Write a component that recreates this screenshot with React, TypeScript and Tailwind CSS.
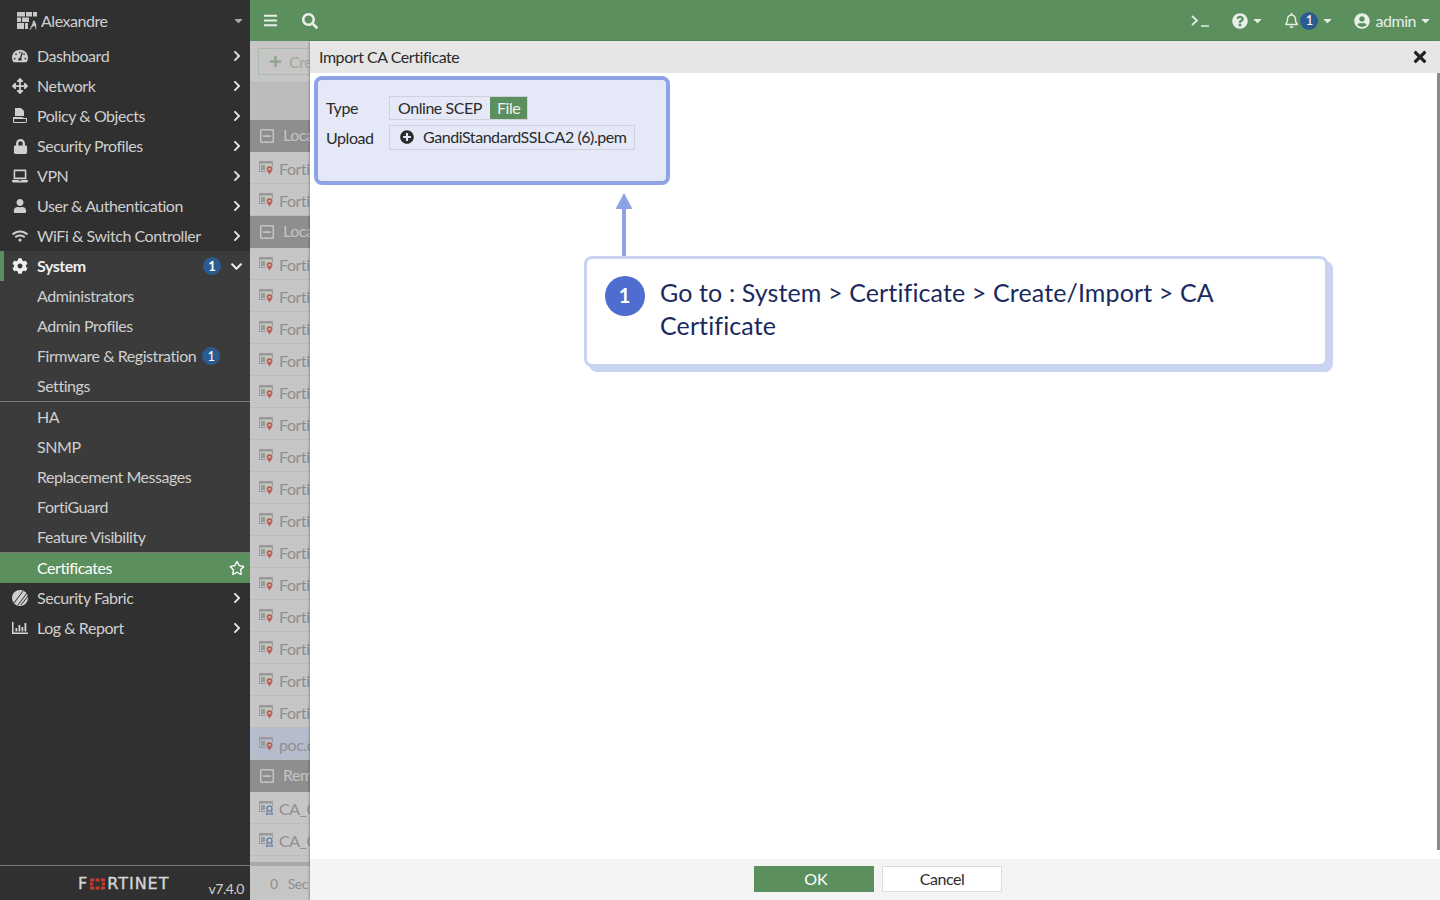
import React from "react";
import {
  FaArrowsAlt,
  FaBars,
  FaCaretDown,
  FaChevronDown,
  FaChevronRight,
  FaCog,
  FaLaptop,
  FaLock,
  FaPlus,
  FaPlusCircle,
  FaQuestionCircle,
  FaRegBell,
  FaRegMinusSquare,
  FaRegStar,
  FaSearch,
  FaTachometerAlt,
  FaTimes,
  FaUser,
  FaUserCircle,
  FaWifi,
} from "react-icons/fa";

const Badge = () => (
  <span className="flex h-[18px] w-[18px] items-center justify-center rounded-full bg-[#2a5b91] text-[13px] leading-none tracking-normal text-white">
    1
  </span>
);

const PolicyIcon = () => (
  <svg viewBox="0 0 16 16" className="h-4 w-4" fill="#cfcfcf">
    <path d="M3 0h6l3 3v5H3z" />
    <path d="M1 9h9l2 1h3v3a2 2 0 0 1-2 2H2a1 1 0 0 1-1-1zM2 11v3h11a1 1 0 0 0 1-1v-2z" />
  </svg>
);

const FabricIcon = () => (
  <svg viewBox="0 0 16 16" className="h-4 w-4">
    <circle cx="8" cy="8" r="8" fill="#cfcfcf" />
    <path d="M15 3 6 15M16 6l-7 9M11 1 2 13" stroke="#303030" strokeWidth="1" />
  </svg>
);

const LogIcon = () => (
  <svg viewBox="0 0 16 16" className="h-4 w-4" fill="#d6d6d6">
    <path d="M0 2h1.500v10.500H16V14H0z" />
    <path d="M3.500 8h1.800v3.500H3.500zM6.500 5h1.800v6.500H6.500zM9.500 7h1.800v4.500H9.500zM12.500 3h1.800v8.500h-1.800z" />
  </svg>
);

const WallLogo = () => (
  <svg viewBox="0 0 20 20" className="h-5 w-5" fill="#c8c8c8">
    <path d="M0 1h8v4.500H0zM9 1h6v4.500H9zM16 1h4v4.500h-4zM0 6.500h4V11H0zM5 6.500h7V11H5zM0 12h7v6H0zM8 12h3v6H8z" />
    <path d="M12 19l3-6 1-4 2 1 1.500 3.500V19h-1l-1-4-2 1-2 3z" stroke="#303030" strokeWidth="0.6" />
  </svg>
);

const CertIcon = ({ kind }: { kind: "pin" | "ribbon" }) => (
  <svg viewBox="0 0 15 15" className="-mt-[2px] h-[15px] w-[15px] shrink-0">
    <path d="M0 1h14v2.500H0z" fill="#9a9a9a" />
    <path d="M0 1h1v10h6v1H0zM2 5h4v5H2z" fill="#9a9a9a" />
    <path d="M13 3.500h1V6h-1z" fill="#9a9a9a" />
    {kind === "pin" ? (
      <>
        <path d="M10.500 6a3 3 0 0 1 3 3c0 2-3 5.500-3 5.500S7.500 11 7.500 9a3 3 0 0 1 3-3z" fill="#b5675c" />
        <circle cx="10.500" cy="9" r="1" fill="#c6c6c6" />
      </>
    ) : (
      <>
        <circle cx="10.500" cy="8.500" r="2.500" fill="none" stroke="#6c89a8" strokeWidth="1.600" />
        <path d="M8.500 11l-1 4 3-1.500 3 1.500-1-4" fill="none" stroke="#6c89a8" strokeWidth="1.300" />
      </>
    )}
  </svg>
);

const FortinetLogo = () => (
  <span className="mt-[1px] flex items-center text-[16px] leading-none tracking-[1px] text-[#d4d4d4] [-webkit-text-stroke:0.4px_#d4d4d4] [font-family:'DejaVu_Sans',sans-serif]">
    F
    <svg viewBox="0 0 15 11" className="mx-[2px] h-[12px] w-[15px]" fill="#c8392b">
      <path d="M0 0h4v3H0zM5.500 0h4v3h-4zM11 0h4v3h-4zM0 4h3v3H0zM12 4h3v3h-3zM0 8h4v3H0zM5.500 8h4v3h-4zM11 8h4v3h-4z" />
    </svg>
    RTINET
  </span>
);

const topMenu = [
  { label: "Dashboard", icon: <FaTachometerAlt size={16} /> },
  { label: "Network", icon: <FaArrowsAlt size={16} /> },
  { label: "Policy & Objects", icon: <PolicyIcon /> },
  { label: "Security Profiles", icon: <FaLock size={15} /> },
  { label: "VPN", icon: <FaLaptop size={16} /> },
  { label: "User & Authentication", icon: <FaUser size={14} /> },
  { label: "WiFi & Switch Controller", icon: <FaWifi size={16} /> },
];

const MenuRow = ({ label, icon }: { label: string; icon: React.ReactNode }) => (
  <div className="flex h-[30px] items-center pl-3 pr-[7px] text-[#cfcfcf]">
    <span className="flex w-4 justify-center">{icon}</span>
    <span className="ml-[9px] flex-1">{label}</span>
    <FaChevronRight size={12} className="text-[#e2e2e2]" />
  </div>
);

const SubRow = ({ label, badge }: { label: string; badge?: boolean }) => (
  <div className="flex h-[30px] items-center gap-[6px] pl-[37px] text-[#cfcfcf]">
    {label}
    {badge ? <Badge /> : null}
  </div>
);

const Sidebar = () => (
  <aside className="flex h-full w-[250px] shrink-0 flex-col bg-[#303030]">
    <div className="flex h-[41px] items-center pl-[17px] pr-[5px] text-[#cfcfcf]">
      <WallLogo />
      <span className="ml-[4px] flex-1">Alexandre</span>
      <FaCaretDown size={13} className="text-[#aaaaaa]" />
    </div>
    {topMenu.map((item) => (
      <MenuRow key={item.label} label={item.label} icon={item.icon} />
    ))}
    <div className="bg-[#3b3b3b]">
      <div className="flex h-[30px] items-center border-l-4 border-[#5c8f5e] pl-2 pr-[7px] font-bold text-[#efefef]">
        <span className="flex w-4 justify-center">
          <FaCog size={16} />
        </span>
        <span className="ml-[9px] flex-1">System</span>
        <Badge />
        <FaChevronDown size={13} className="ml-[9px]" />
      </div>
      <SubRow label="Administrators" />
      <SubRow label="Admin Profiles" />
      <SubRow label="Firmware & Registration" badge />
      <SubRow label="Settings" />
      <div className="h-px bg-[#7a7a7a]" />
      <SubRow label="HA" />
      <SubRow label="SNMP" />
      <SubRow label="Replacement Messages" />
      <SubRow label="FortiGuard" />
      <SubRow label="Feature Visibility" />
    </div>
    <div className="h-px bg-[#7a7a7a]" />
    <div className="flex h-[30px] items-center bg-[#5c8f5e] pl-[37px] pr-[5px] text-white">
      <span className="flex-1">Certificates</span>
      <FaRegStar size={16} />
    </div>
    <MenuRow label="Security Fabric" icon={<FabricIcon />} />
    <MenuRow label="Log & Report" icon={<LogIcon />} />
    <div className="mt-auto flex h-[35px] items-center border-t border-[#7a7a7a] pl-[78px] pr-[6px]">
      <FortinetLogo />
      <span className="ml-auto pt-[12px] text-[14px] leading-none text-[#cfcfcf]">v7.4.0</span>
    </div>
  </aside>
);

const TopBar = () => (
  <header className="flex h-[41px] shrink-0 items-center bg-[#5c8f5e] pl-[13px] pr-[8px] text-[#e6eee6]">
    <FaBars size={15} />
    <FaSearch size={16} className="ml-[24px]" />
    <div className="ml-auto flex items-center">
      <svg viewBox="0 0 18 12" className="h-3 w-[18px]" fill="none" stroke="#e6eee6" strokeWidth="1.700">
        <path d="M1 1l5 4.500L1 10M10 11h8" />
      </svg>
      <FaQuestionCircle size={16} className="ml-[23px]" />
      <FaCaretDown size={13} className="ml-[3px]" />
      <FaRegBell size={15} className="ml-[20px]" />
      <span className="ml-[1px]">
        <Badge />
      </span>
      <FaCaretDown size={13} className="ml-[3px]" />
      <FaUserCircle size={16} className="ml-[20px]" />
      <span className="ml-[5px] leading-none">admin</span>
      <FaCaretDown size={13} className="ml-[3px]" />
    </div>
  </header>
);

const Section = ({ label }: { label: string }) => (
  <div className="flex h-8 shrink-0 items-center gap-2 bg-[#8e8e8e] pl-[9px] text-[#c4c4c4]">
    <FaRegMinusSquare size={16} className="shrink-0" />
    <span className="pb-[2px]">{label}</span>
  </div>
);

const CertRow = ({ label, kind, selected }: { label: string; kind: "pin" | "ribbon"; selected?: boolean }) => (
  <div
    className={`flex h-8 shrink-0 items-center gap-[5px] border-b border-[#bcbcbc] pl-[9px] pt-[2px] text-[#8f8f8f] ${
      selected ? "bg-[#b5bccb]" : "bg-[#c6c6c6]"
    }`}
  >
    <CertIcon kind={kind} />
    {label}
  </div>
);

const forti = Array.from({ length: 15 }, (_, i) => i);

// what is left of the certificate table next to the slide-in dialog
const BackgroundStrip = () => (
  <div className="flex h-full w-[60px] shrink-0 flex-col overflow-hidden whitespace-nowrap bg-[#c6c6c6]">
    <div className="flex h-[42px] shrink-0 items-center border-b border-[#b8b8b8] pl-2">
      <div className="flex h-[27px] w-[80px] shrink-0 items-center gap-[7px] border border-[#a9bba9] pl-[10px] text-[#9aa99a]">
        <FaPlus size={13} className="shrink-0 text-[#8ea58e]" />
        Cre
      </div>
    </div>
    <div className="h-[37px] shrink-0 bg-[#bcbcbc]" />
    <Section label="Loca" />
    <CertRow label="Forti" kind="pin" />
    <CertRow label="Forti" kind="pin" />
    <Section label="Loca" />
    {forti.map((i) => (
      <CertRow key={i} label="Forti" kind="pin" />
    ))}
    <CertRow label="poc.c" kind="pin" selected />
    <Section label="Rem" />
    <CertRow label="CA_C" kind="ribbon" />
    <CertRow label="CA_C" kind="ribbon" />
    <div className="mt-[6px] h-[4px] shrink-0 bg-[#a9a9a9]" />
    <div className="flex flex-1 items-center gap-[10px] pl-[20px] text-[14px] text-[#8f8f8f]">
      <span>0</span>
      <span>Sec</span>
    </div>
  </div>
);

const ImportForm = () => (
  <div className="ml-[4px] mt-[3px] h-[109px] w-[356px] rounded-lg border-4 border-[#8ea2e6] bg-[#e4e8f7] pl-2 pt-4 text-[#2b2b2b]">
    <div className="flex h-6 items-center">
      <span className="w-[63px]">Type</span>
      <div className="flex h-6 border border-[#cfd2dc]">
        <span className="flex items-center pb-[1px] pl-2 pr-[8px]">Online SCEP</span>
        <span className="flex items-center bg-[#5c8f5e] px-[7px] pb-[1px] text-[#f2f2f2]">File</span>
      </div>
    </div>
    <div className="mt-[5px] flex h-[25px] items-center">
      <span className="w-[63px]">Upload</span>
      <div className="flex h-[25px] items-center border border-[#cfd2dc] pb-[1px] pl-[10px] pr-2">
        <FaPlusCircle size={14} />
        <span className="ml-[9px]">GandiStandardSSLCA2 (6).pem</span>
      </div>
    </div>
  </div>
);

const Callout = () => (
  <>
    <svg viewBox="0 0 18 64" className="absolute left-[305px] top-[152px] h-16 w-[18px]" fill="#8ea2e6">
      <path d="M9 0l8.500 16H11v48H7V16H.5z" />
    </svg>
    <div className="absolute left-[274px] top-[215px] flex h-[111px] w-[744px] items-start rounded-lg border-[3px] border-[#c9d3f2] bg-white pl-[18px] pt-[17px] shadow-[5px_5px_0_#c9d3f2]">
      <span className="flex h-10 w-10 shrink-0 items-center justify-center rounded-full bg-[#4f6dcf] pb-[2px] pr-[1px] text-[20px] font-bold leading-none tracking-normal text-white">
        1
      </span>
      <p className="ml-[15px] text-[25px] leading-[33px] tracking-[0.12px] text-[#1b2a5e]">
        Go to : System &gt; Certificate &gt; Create/Import &gt; CA Certificate
      </p>
    </div>
  </>
);

const Dialog = () => (
  <section className="relative flex h-full flex-1 flex-col bg-white shadow-[-1px_0_2px_rgba(0,0,0,0.25)]">
    <div className="flex h-8 shrink-0 items-center justify-between bg-[#e6e6e6] pl-[9px] pr-[11px] text-[#2b2b2b]">
      <span>Import CA Certificate</span>
      <FaTimes size={18} className="text-[#222222]" />
    </div>
    <div className="relative flex-1">
      <ImportForm />
      <div className="absolute right-0 top-0 h-[777px] w-[3px] bg-[#8a8a8a]" />
    </div>
    <div className="flex h-[41px] shrink-0 items-start gap-2 bg-[#f4f4f4] pl-[444px] pt-[7px]">
      <button className="h-[26px] w-[120px] bg-[#5c8f5e] pl-1 tracking-normal text-white">OK</button>
      <button className="h-[26px] w-[120px] border border-[#dcdcdc] bg-white text-[#2b2b2b]">Cancel</button>
    </div>
    <div className="pointer-events-none absolute inset-x-0 top-0">
      <Callout />
    </div>
  </section>
);

export default function App() {
  return (
    <div className="flex h-screen overflow-hidden text-[16px] tracking-[-0.45px] [font-family:Lato,sans-serif]">
      <Sidebar />
      <main className="flex min-w-0 flex-1 flex-col">
        <TopBar />
        <div className="flex min-h-0 flex-1">
          <BackgroundStrip />
          <Dialog />
        </div>
      </main>
    </div>
  );
}
